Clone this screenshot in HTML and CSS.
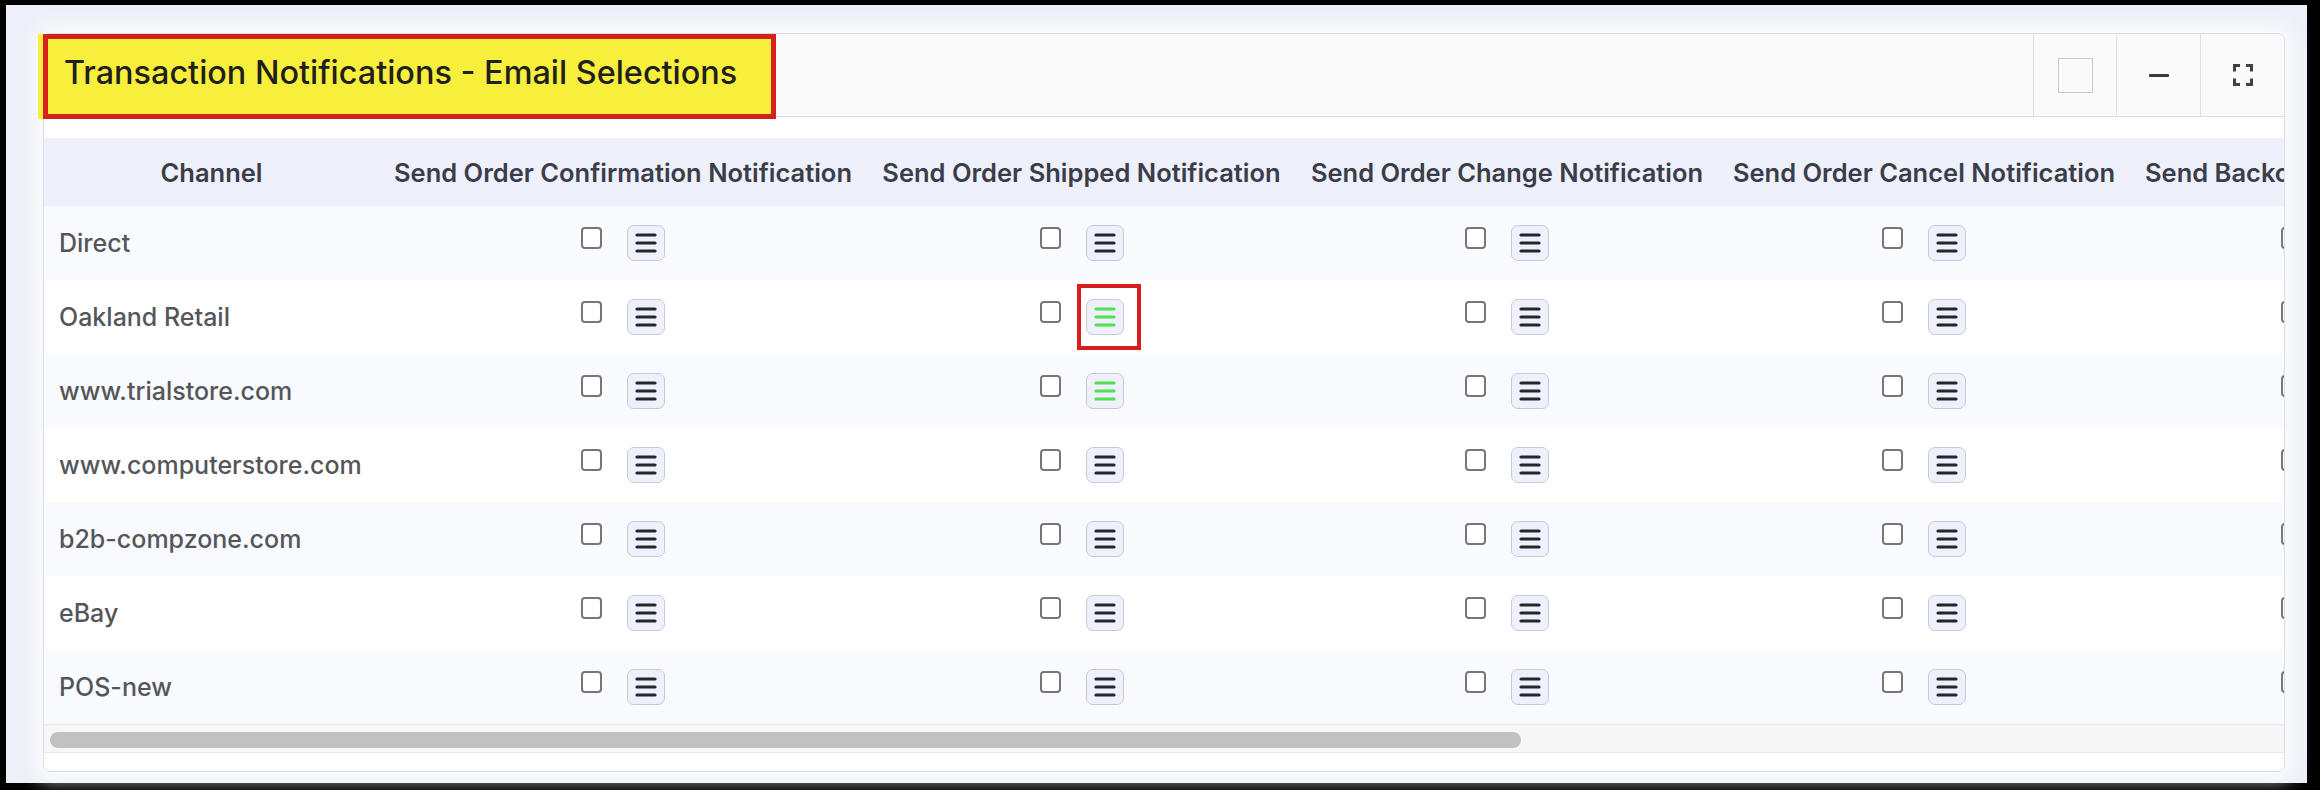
FILE: index.html
```html
<!DOCTYPE html>
<html>
<head>
<meta charset="utf-8">
<link rel="stylesheet" href="styles.css">
</head>
<body>
<svg class="defs" width="0" height="0">
  <symbol id="ham" viewBox="0 0 22 20">
    <path d="M2 2H20M2 10H20M2 18H20" stroke="currentColor" stroke-width="3.2" stroke-linecap="round" fill="none"/>
  </symbol>
</svg>
<div class="frame">
  <div class="card">
    <div class="head">
      <div class="title">Transaction Notifications - Email Selections</div>
      <div class="tools">
        <div class="tool first"><span class="box"></span></div>
        <div class="tool"><span class="minus"></span></div>
        <div class="tool">
          <svg class="expand" width="20" height="22" viewBox="0 0 20 22"><path d="M1.5 7.5V1.5H7M13 1.5H18.5V7.5M1.5 14.5V20.5H7M13 20.5H18.5V14.5" stroke="#414141" stroke-width="3" fill="none"/></svg>
        </div>
      </div>
    </div>
    <div class="spacer"></div>
    <div class="tablewrap">
      <table>
        <colgroup>
          <col class="w1"><col class="w2"><col class="w3"><col class="w4"><col class="w5"><col class="w6">
        </colgroup>
        <thead>
          <tr>
            <th>Channel</th>
            <th>Send Order Confirmation Notification</th>
            <th>Send Order Shipped Notification</th>
            <th>Send Order Change Notification</th>
            <th>Send Order Cancel Notification</th>
            <th class="left">Send Backorder Notification</th>
          </tr>
        </thead>
        <tbody>
          <tr class="odd">
            <td class="ch">Direct</td>
            <td class="c"><span class="ctl"><input type="checkbox" class="cb"><button class="menu"><svg width="22" height="20"><use href="#ham"/></svg></button></span></td>
            <td class="c"><span class="ctl"><input type="checkbox" class="cb"><button class="menu"><svg width="22" height="20"><use href="#ham"/></svg></button></span></td>
            <td class="c"><span class="ctl"><input type="checkbox" class="cb"><button class="menu"><svg width="22" height="20"><use href="#ham"/></svg></button></span></td>
            <td class="c"><span class="ctl"><input type="checkbox" class="cb"><button class="menu"><svg width="22" height="20"><use href="#ham"/></svg></button></span></td>
            <td class="c"><span class="ctl"><input type="checkbox" class="cb"><button class="menu"><svg width="22" height="20"><use href="#ham"/></svg></button></span></td>
          </tr>
          <tr>
            <td class="ch">Oakland Retail</td>
            <td class="c"><span class="ctl"><input type="checkbox" class="cb"><button class="menu"><svg width="22" height="20"><use href="#ham"/></svg></button></span></td>
            <td class="c"><span class="ctl"><input type="checkbox" class="cb"><button class="menu green annot"><svg width="22" height="20"><use href="#ham"/></svg></button></span></td>
            <td class="c"><span class="ctl"><input type="checkbox" class="cb"><button class="menu"><svg width="22" height="20"><use href="#ham"/></svg></button></span></td>
            <td class="c"><span class="ctl"><input type="checkbox" class="cb"><button class="menu"><svg width="22" height="20"><use href="#ham"/></svg></button></span></td>
            <td class="c"><span class="ctl"><input type="checkbox" class="cb"><button class="menu"><svg width="22" height="20"><use href="#ham"/></svg></button></span></td>
          </tr>
          <tr class="odd">
            <td class="ch">www.trialstore.com</td>
            <td class="c"><span class="ctl"><input type="checkbox" class="cb"><button class="menu"><svg width="22" height="20"><use href="#ham"/></svg></button></span></td>
            <td class="c"><span class="ctl"><input type="checkbox" class="cb"><button class="menu green"><svg width="22" height="20"><use href="#ham"/></svg></button></span></td>
            <td class="c"><span class="ctl"><input type="checkbox" class="cb"><button class="menu"><svg width="22" height="20"><use href="#ham"/></svg></button></span></td>
            <td class="c"><span class="ctl"><input type="checkbox" class="cb"><button class="menu"><svg width="22" height="20"><use href="#ham"/></svg></button></span></td>
            <td class="c"><span class="ctl"><input type="checkbox" class="cb"><button class="menu"><svg width="22" height="20"><use href="#ham"/></svg></button></span></td>
          </tr>
          <tr>
            <td class="ch">www.computerstore.com</td>
            <td class="c"><span class="ctl"><input type="checkbox" class="cb"><button class="menu"><svg width="22" height="20"><use href="#ham"/></svg></button></span></td>
            <td class="c"><span class="ctl"><input type="checkbox" class="cb"><button class="menu"><svg width="22" height="20"><use href="#ham"/></svg></button></span></td>
            <td class="c"><span class="ctl"><input type="checkbox" class="cb"><button class="menu"><svg width="22" height="20"><use href="#ham"/></svg></button></span></td>
            <td class="c"><span class="ctl"><input type="checkbox" class="cb"><button class="menu"><svg width="22" height="20"><use href="#ham"/></svg></button></span></td>
            <td class="c"><span class="ctl"><input type="checkbox" class="cb"><button class="menu"><svg width="22" height="20"><use href="#ham"/></svg></button></span></td>
          </tr>
          <tr class="odd">
            <td class="ch">b2b-compzone.com</td>
            <td class="c"><span class="ctl"><input type="checkbox" class="cb"><button class="menu"><svg width="22" height="20"><use href="#ham"/></svg></button></span></td>
            <td class="c"><span class="ctl"><input type="checkbox" class="cb"><button class="menu"><svg width="22" height="20"><use href="#ham"/></svg></button></span></td>
            <td class="c"><span class="ctl"><input type="checkbox" class="cb"><button class="menu"><svg width="22" height="20"><use href="#ham"/></svg></button></span></td>
            <td class="c"><span class="ctl"><input type="checkbox" class="cb"><button class="menu"><svg width="22" height="20"><use href="#ham"/></svg></button></span></td>
            <td class="c"><span class="ctl"><input type="checkbox" class="cb"><button class="menu"><svg width="22" height="20"><use href="#ham"/></svg></button></span></td>
          </tr>
          <tr>
            <td class="ch">eBay</td>
            <td class="c"><span class="ctl"><input type="checkbox" class="cb"><button class="menu"><svg width="22" height="20"><use href="#ham"/></svg></button></span></td>
            <td class="c"><span class="ctl"><input type="checkbox" class="cb"><button class="menu"><svg width="22" height="20"><use href="#ham"/></svg></button></span></td>
            <td class="c"><span class="ctl"><input type="checkbox" class="cb"><button class="menu"><svg width="22" height="20"><use href="#ham"/></svg></button></span></td>
            <td class="c"><span class="ctl"><input type="checkbox" class="cb"><button class="menu"><svg width="22" height="20"><use href="#ham"/></svg></button></span></td>
            <td class="c"><span class="ctl"><input type="checkbox" class="cb"><button class="menu"><svg width="22" height="20"><use href="#ham"/></svg></button></span></td>
          </tr>
          <tr class="odd">
            <td class="ch">POS-new</td>
            <td class="c"><span class="ctl"><input type="checkbox" class="cb"><button class="menu"><svg width="22" height="20"><use href="#ham"/></svg></button></span></td>
            <td class="c"><span class="ctl"><input type="checkbox" class="cb"><button class="menu"><svg width="22" height="20"><use href="#ham"/></svg></button></span></td>
            <td class="c"><span class="ctl"><input type="checkbox" class="cb"><button class="menu"><svg width="22" height="20"><use href="#ham"/></svg></button></span></td>
            <td class="c"><span class="ctl"><input type="checkbox" class="cb"><button class="menu"><svg width="22" height="20"><use href="#ham"/></svg></button></span></td>
            <td class="c"><span class="ctl"><input type="checkbox" class="cb"><button class="menu"><svg width="22" height="20"><use href="#ham"/></svg></button></span></td>
          </tr>
        </tbody>
      </table>
    </div>
    <div class="hscroll"><div class="thumb"></div></div>
  </div>
</div>
</body>
</html>
```
FILE: styles.css
```css
html, body {
  margin: 0;
  padding: 0;
  background: #000;
  font-family: Inter, "Noto Sans", "Liberation Sans", sans-serif;
}

.defs {
  position: absolute;
  width: 0;
  height: 0;
  overflow: hidden;
}

.frame {
  margin: 5px 13px 7px 6px;
  height: 778px;
  box-sizing: border-box;
  padding: 28px 22px 0 37px;
  background: #eef0f9;
}

.card {
  width: 2242px;
  height: 739px;
  box-sizing: border-box;
  border: 1px solid #dcdde4;
  border-radius: 7px;
  background: #fff;
  box-shadow: 0 0 18px 8px rgba(255, 255, 255, 0.8);
  display: flex;
  flex-direction: column;
}

.head {
  height: 83px;
  flex: none;
  display: flex;
  box-sizing: border-box;
  background: #fafafa;
  border-bottom: 1px solid #dedede;
  border-radius: 6px 6px 0 0;
}

.title {
  flex: none;
  box-sizing: border-box;
  width: 733px;
  height: 85px;
  margin-left: -1px;
  padding-left: 16px;
  padding-bottom: 8px;
  display: flex;
  align-items: center;
  background: #f8ee3c;
  border: 5px solid #d6211b;
  box-shadow: -5px 0 0 #f8ee3c;
  font-size: 32.4px;
  font-weight: 500;
  color: #1f1f1c;
  white-space: nowrap;
}

.tools {
  margin-left: auto;
  display: flex;
}

.tool {
  width: 83px;
  display: flex;
  align-items: center;
  justify-content: center;
  border-left: 1px solid #e0e0e0;
}

.tool.first {
  width: 82px;
}

.box {
  width: 35px;
  height: 35px;
  box-sizing: border-box;
  border: 1px solid #c9c9c9;
  background: #fafafa;
}

.minus {
  width: 20px;
  height: 3px;
  border-radius: 1px;
  background: #3a3a3a;
}

.spacer {
  height: 21px;
  flex: none;
}

.tablewrap {
  height: 586px;
  flex: none;
  overflow: hidden;
}

table {
  border-collapse: collapse;
  table-layout: fixed;
  width: 2471px;
}

.w1 { width: 335px; }
.w2 { width: 488px; }
.w3 { width: 429px; }
.w4 { width: 422px; }
.w5 { width: 412px; }
.w6 { width: 385px; }

th {
  height: 68px;
  padding: 0 12px;
  background: #eef0fb;
  font-size: 25.5px;
  font-weight: 600;
  color: #3b3d48;
  text-align: center;
  white-space: nowrap;
  overflow: hidden;
}

th.left {
  text-align: left;
  padding-left: 15px;
}

td {
  height: 74px;
  padding: 0 15px;
  white-space: nowrap;
}

tr.odd td {
  background: #f8fafe;
}

td.ch {
  text-align: left;
  font-size: 25px;
  font-weight: 500;
  color: #55565a;
}

td.c {
  text-align: center;
  font-size: 0;
}

.ctl {
  display: inline-flex;
  align-items: flex-start;
  gap: 25px;
  vertical-align: middle;
}

.cb {
  appearance: none;
  -webkit-appearance: none;
  width: 21px;
  height: 22px;
  margin: 2px 0 0;
  box-sizing: border-box;
  border: 2px solid #777;
  border-radius: 4px;
  background: #fff;
}

.menu {
  position: relative;
  width: 38px;
  height: 36px;
  padding: 0;
  box-sizing: border-box;
  border: 1px solid #c8c9d3;
  border-radius: 7px;
  background: #eef0fb;
  color: #25262b;
  display: flex;
  align-items: center;
  justify-content: center;
}

.menu.green {
  color: #4fdf4f;
}

.menu.annot::after {
  content: "";
  position: absolute;
  left: -10px;
  top: -16px;
  width: 64px;
  height: 66px;
  box-sizing: border-box;
  border: 4px solid #d71d1d;
}

.hscroll {
  height: 29px;
  flex: none;
  box-sizing: border-box;
  padding: 7px 0 0 6px;
  background: #f7f7f7;
  border-top: 1px solid #e6e6e6;
  border-bottom: 1px solid #e6e6e6;
}

.thumb {
  width: 1471px;
  height: 16px;
  border-radius: 8px;
  background: #c1c1c1;
}
```
